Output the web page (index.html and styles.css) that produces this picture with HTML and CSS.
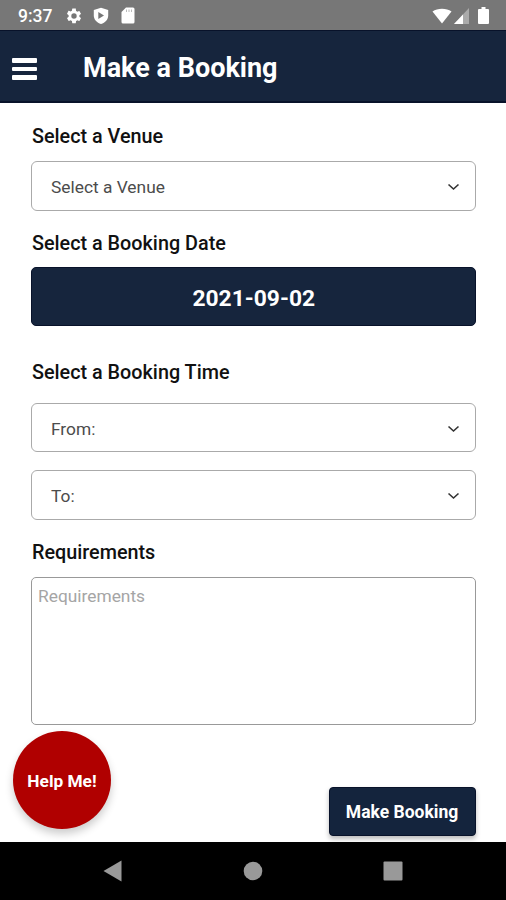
FILE: index.html
```html
<!DOCTYPE html>
<html lang="en">
<head>
<meta charset="utf-8">
<title>Make a Booking</title>
<link rel="stylesheet" href="styles.css">
</head>
<body>
<div class="screen">
  <div class="status">
    <span class="clock">9:37</span>
    <svg class="gear" width="18" height="18" viewBox="0 0 24 24"><path fill="#fff" d="M19.14 12.94c.04-.3.06-.61.06-.94s-.02-.64-.07-.94l2.03-1.58a.49.49 0 0 0 .12-.61l-1.92-3.32a.49.49 0 0 0-.59-.22l-2.39.96a7 7 0 0 0-1.62-.94l-.36-2.54A.48.48 0 0 0 13.92 2h-3.84a.47.47 0 0 0-.47.41l-.36 2.54c-.59.24-1.13.57-1.62.94l-2.39-.96a.48.48 0 0 0-.59.22L2.74 8.87a.47.47 0 0 0 .12.61l2.03 1.58a6 6 0 0 0 0 1.88l-2.03 1.58a.49.49 0 0 0-.12.61l1.92 3.32c.12.22.37.29.59.22l2.39-.96c.5.38 1.03.7 1.62.94l.36 2.54c.05.24.24.41.48.41h3.84c.24 0 .44-.17.47-.41l.36-2.54a7 7 0 0 0 1.62-.94l2.39.96c.22.08.47 0 .59-.22l1.92-3.32a.47.47 0 0 0-.12-.61zM12 15.600a3.600 3.600 0 1 1 0-7.200 3.600 3.600 0 0 1 0 7.200z"/></svg>
    <svg class="shield" width="16" height="18" viewBox="0 0 16 18"><path fill="#fff" d="M8 .7 15.2 3v5.500c0 4-3 7.300-7.200 8.600C3.800 15.800.8 12.500.8 8.500V3z"/><path fill="#777" d="M5.300 5v7L11 8.500z"/></svg>
    <svg class="card" width="14" height="17" viewBox="0 0 14 17"><path fill="#fff" d="M5 .5h7A1.500 1.500 0 0 1 13.500 2v13a1.500 1.500 0 0 1-1.500 1.500H2A1.500 1.500 0 0 1 .5 15V5z"/><path stroke="#bbb" stroke-width="1" d="M5.500 2.500v2.500M8 2.500v2.500M10.500 2.500v2.500"/></svg>
    <span class="spacer"></span>
    <svg width="20" height="16" viewBox="0 0 20 16"><path fill="#fff" d="M.5 3.500C5.500-.3 14.500-.3 19.500 3.500L10 15.500z"/></svg>
    <svg class="signal" width="15" height="16" viewBox="0 0 15 16"><path fill="#aaa" d="M15 0v16H0z"/><path fill="#fff" d="M9 6.400V16H0z"/></svg>
    <svg class="battery" width="11" height="17" viewBox="0 0 11 17"><path fill="#fff" d="M3.500 0h4v2H10a1 1 0 0 1 1 1v13a1 1 0 0 1-1 1H1a1 1 0 0 1-1-1V3a1 1 0 0 1 1-1h2.500z"/></svg>
  </div>
  <header class="bar">
    <div class="burger"><i></i><i></i><i></i></div>
    <h1>Make a Booking</h1>
  </header>
  <main class="form">
    <label class="venue-label"><span>Select a Venue</span></label>
    <div class="select"><span class="venue">Select a Venue</span><svg width="13" height="8" viewBox="0 0 13 8"><path d="M1.500 1.500l5 4.500 5-4.500"/></svg></div>
    <label class="date-label"><span>Select a Booking Date</span></label>
    <div class="date"><span>2021-09-02</span></div>
    <label class="time-label"><span>Select a Booking Time</span></label>
    <div class="select from"><span>From:</span><svg width="13" height="8" viewBox="0 0 13 8"><path d="M1.500 1.500l5 4.500 5-4.500"/></svg></div>
    <div class="select to"><span>To:</span><svg width="13" height="8" viewBox="0 0 13 8"><path d="M1.500 1.500l5 4.500 5-4.500"/></svg></div>
    <label class="req-label"><span>Requirements</span></label>
    <div class="area"><span>Requirements</span></div>
    <div class="actions">
      <div class="help"><span>Help Me!</span></div>
      <div class="submit"><span>Make Booking</span></div>
    </div>
  </main>
  <nav class="nav">
    <svg width="20" height="22" viewBox="0 0 20 22"><path fill="#999" d="M18.500.5v21L.5 11z"/></svg>
    <svg width="20" height="20" viewBox="0 0 20 20"><circle cx="10" cy="10" r="9.300" fill="#999"/></svg>
    <svg width="20" height="20" viewBox="0 0 20 20"><rect x=".5" y=".5" width="19" height="19" rx="1" fill="#999"/></svg>
  </nav>
</div>
</body>
</html>
```
FILE: styles.css
```css
* { box-sizing: border-box; }
body { margin: 0; background: #fff; font-family: Roboto, "Liberation Sans", sans-serif; color: #111; }
svg { display: block; flex: none; }
.screen { width: 506px; height: 900px; display: flex; flex-direction: column; overflow: hidden; }
.status { height: 30px; flex: none; background: #777; display: flex; align-items: center; padding: 1px 17px 0 18px; }
.clock { color: #fff; font-size: 17.500px; font-weight: 500; width: 47px; line-height: 28px; white-space: nowrap; }
.shield { margin-left: 10px; }
.card { margin-left: 12px; }
.spacer { flex: 1; }
.signal { margin-left: 2px; }
.battery { margin-left: 9px; }
.bar { height: 73px; flex: none; background: #16253d; border-top: 1px solid #08122a; border-bottom: 2px solid #08122a; display: flex; align-items: center; padding: 4px 12px 0; }
.burger { width: 25px; display: flex; flex-direction: column; gap: 4px; margin-top: 2px; }
.burger i { height: 4.500px; border-radius: 1px; background: #fff; }
h1 { margin: 0 0 0 46px; font-size: 27px; line-height: 32px; font-weight: 700; color: #fff; white-space: nowrap; }
.form { flex: none; height: 739px; padding: 0 30.500px 0 31px; display: flex; flex-direction: column; }
label { flex: none; display: block; font-size: 19.800px; line-height: 24px; font-weight: 500; padding-left: 1px; height: 24px; white-space: nowrap; }
.venue-label { margin-top: 22px; }
.select { height: 50px; flex: none; border: 1px solid #aaa; border-radius: 6px; display: flex; align-items: center; justify-content: space-between; padding: 2px 15px 0 19px; font-size: 17.350px; color: #4c4c4c; }
.select path { fill: none; stroke: #333; stroke-width: 1.600; }
.venue-label + .select { margin-top: 12px; }
.date-label { margin-top: 21px; }
.date { height: 59px; flex: none; margin-top: 11px; border: 1px solid #08122a; border-radius: 5px; background: #16253d; color: #fff; font-size: 22.800px; font-weight: 700; display: flex; align-items: center; justify-content: center; padding: 3px 0 0 1px; }
.time-label { margin-top: 35px; }
.select.from { height: 49px; margin-top: 18px; }
.to { margin-top: 18px; }
.req-label { margin-top: 21px; }
.area { height: 148px; flex: none; margin-top: 12px; border: 1px solid #999; border-radius: 5px; padding: 7px 6px; font-size: 17.350px; line-height: 22px; color: #a5a5a5; }
.actions { display: flex; justify-content: space-between; align-items: flex-start; height: 112px; margin: 6px 0 0 -18px; }
.help { width: 98px; height: 98px; border-radius: 50%; background: #b00000; color: #fff; font-size: 17.300px; font-weight: 700; display: flex; align-items: center; justify-content: center; padding-top: 2px; box-shadow: 0 5px 8px #0003; white-space: nowrap; }
.submit { width: 147px; height: 49px; margin-top: 56px; border: 1px solid #08122a; border-radius: 4px; background: #14243d; color: #fff; font-size: 17.500px; font-weight: 700; display: flex; align-items: center; justify-content: center; padding-top: 1px; box-shadow: 0 3px 5px #0004; white-space: nowrap; }
.nav { flex: 1; background: #000; display: flex; align-items: center; justify-content: space-between; padding: 0 103px; }
```
